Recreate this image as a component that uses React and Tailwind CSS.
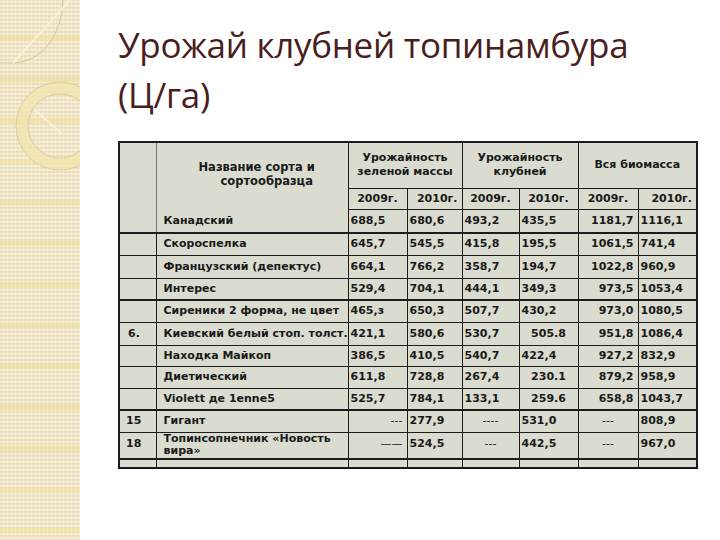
const rows = [
  { n: "", name: "Скороспелка", v: ["645,7", "545,5", "415,8", "195,5", "1061,5", "741,4"], h: "h-[22px]" },
  { n: "", name: "Французский (депектус)", v: ["664,1", "766,2", "358,7", "194,7", "1022,8", "960,9"], h: "h-[23px]" },
  { n: "", name: "Интерес", v: ["529,4", "704,1", "444,1", "349,3", "973,5", "1053,4"], h: "h-[22px]", thick: true },
  { n: "", name: "Сиреники 2 форма, не цвет", v: ["465,з", "650,3", "507,7", "430,2", "973,0", "1080,5"], h: "h-[22px]" },
  { n: "6.", name: "Киевский белый стоп. толст.", v: ["421,1", "580,6", "530,7", "505.8", "951,8", "1086,4"], h: "h-[23px]", c3: true },
  { n: "", name: "Находка Майкоп", v: ["386,5", "410,5", "540,7", "422,4", "927,2", "832,9"], h: "h-[21px]" },
  { n: "", name: "Диетический", v: ["611,8", "728,8", "267,4", "230.1", "879,2", "958,9"], h: "h-[22px]", c3: true },
  { n: "", name: "Violett де 1enne5", v: ["525,7", "784,1", "133,1", "259.6", "658,8", "1043,7"], h: "h-[22px]", c3: true, thick: true },
];

const cell = "border border-[#1c1c1c] px-[2px] py-0 align-middle whitespace-nowrap";
const right = "text-right pr-[4px]";
const center = "text-center";

function ValueCells({ v, c3 }) {
  return (
    <>
      <td className={cell}>{v[0]}</td>
      <td className={cell}>{v[1]}</td>
      <td className={cell}>{v[2]}</td>
      <td className={`${cell} ${c3 ? center : ""}`}>{v[3]}</td>
      <td className={`${cell} ${right}`}>{v[4]}</td>
      <td className={cell}>{v[5]}</td>
    </>
  );
}

function Strip() {
  return (
    <div className="relative w-[80px] h-[540px] shrink-0 overflow-hidden bg-[#efe4c4] bg-[repeating-linear-gradient(0deg,#e9dcb6_0px,#e9dcb6_1px,#f3ead2_1px,#f3ead2_3px,#ecdfbd_3px,#ecdfbd_4px)]">
      <div className="absolute inset-0 bg-[repeating-linear-gradient(90deg,transparent_0px,transparent_3px,rgba(255,255,255,0.25)_3px,rgba(255,255,255,0.25)_4px)]" />
      <div className="absolute inset-0 bg-[repeating-linear-gradient(180deg,transparent_0px,transparent_36px,rgba(240,225,160,0.7)_36px,rgba(240,225,160,0.7)_41px)]" />
      <svg className="absolute left-0 top-0" width="80" height="200" viewBox="0 0 80 200" fill="none">
        <path d="M0 63 H13" stroke="#dccba0" strokeWidth="1" />
        <path d="M63 0 A50 63 0 0 1 13 63" stroke="#d8c79a" strokeWidth="1" />
        <path d="M70 0 L13 63" stroke="#f7f0da" strokeWidth="2" />
        <circle cx="60" cy="126" r="38" stroke="#f2e5b0" strokeWidth="12" opacity="0.8" />
        <circle cx="60" cy="126" r="44" stroke="#dccc9e" strokeWidth="1" />
        <circle cx="60" cy="126" r="32" stroke="#dccc9e" strokeWidth="1" />
        <path d="M35 110 L62 134" stroke="#f7f0da" strokeWidth="2" />
      </svg>
    </div>
  );
}

export default function App() {
  return (
    <div className="flex w-[720px] h-[540px] bg-white overflow-hidden">
      <Strip />
      <div className="flex flex-col pl-[38px]">
        <h1 className="mt-[20px] text-[35px] leading-[50px] text-[#4a1e1e] font-['Open_Sans',sans-serif] font-normal tracking-[-0.3px]">
          <div>Урожай клубней топинамбура</div>
          <div>(Ц/га)</div>
        </h1>
        <table className="mt-[21px] border-collapse table-fixed w-[578px] bg-[#d9dccf] text-[#1a1a1a] text-[11px] leading-[12px] font-['DejaVu_Sans',sans-serif] font-semibold border-2 border-[#1c1c1c]">
          <colgroup>
            <col className="w-[37px]" />
            <col className="w-[192px]" />
            <col className="w-[59px]" />
            <col className="w-[55px]" />
            <col className="w-[57px]" />
            <col className="w-[59px]" />
            <col className="w-[60px]" />
            <col className="w-[59px]" />
          </colgroup>
          <tbody>
            <tr className="h-[45px]">
              <td rowSpan={3} className="border border-[#1c1c1c] border-r-[#777]" />
              <td rowSpan={3} className="border border-[#1c1c1c] border-l-[#777] p-0 align-top">
                <div className="flex flex-col h-[89px]">
                  <div className="pt-[17px] pl-[42px] text-[11.5px] leading-[14px]">Название сорта и</div>
                  <div className="pl-[64px] text-[11.5px] leading-[14px]">сортообразца</div>
                  <div className="mt-auto pb-[5px] pl-[7px]">Канадский</div>
                </div>
              </td>
              <td colSpan={2} className={`${cell} ${center} leading-[14px]`}>
                <div>Урожайность</div>
                <div>зеленой массы</div>
              </td>
              <td colSpan={2} className={`${cell} ${center} leading-[14px]`}>
                <div>Урожайность</div>
                <div>клубней</div>
              </td>
              <td colSpan={2} className={`${cell} ${center}`}>Вся биомасса</td>
            </tr>
            <tr className="h-[21px]">
              <td className={`${cell} ${center}`}>2009г.</td>
              <td className={`${cell} ${right}`}>2010г.</td>
              <td className={`${cell} ${center}`}>2009г.</td>
              <td className={`${cell} ${center}`}>2010г.</td>
              <td className={`${cell} ${center}`}>2009г.</td>
              <td className={`${cell} ${right}`}>2010г.</td>
            </tr>
            <tr className="h-[23px] border-b-2 border-[#1c1c1c]">
              <ValueCells v={["688,5", "680,6", "493,2", "435,5", "1181,7", "1116,1"]} />
            </tr>
            {rows.map((r) => (
              <tr key={r.name} className={`${r.h} ${r.thick ? "border-b-2 border-[#1c1c1c]" : ""}`}>
                <td className={`${cell} pl-[8px]`}>{r.n}</td>
                <td className={`${cell} pl-[7px]`}>{r.name}</td>
                <ValueCells v={r.v} c3={r.c3} />
              </tr>
            ))}
            <tr className="h-[22px]">
              <td className={`${cell} pl-[6px]`}>15</td>
              <td className={`${cell} pl-[7px]`}>Гигант</td>
              <td className={`${cell} ${right} font-normal`}>---</td>
              <td className={cell}>277,9</td>
              <td className={`${cell} ${center} font-normal`}>----</td>
              <td className={cell}>531,0</td>
              <td className={`${cell} ${center} font-normal`}>---</td>
              <td className={cell}>808,9</td>
            </tr>
            <tr className="h-[27px] border-b-2 border-[#1c1c1c]">
              <td className={`${cell} pl-[6px] align-bottom pb-[3px]`}>18</td>
              <td className={`${cell} pl-[7px] align-top pt-0 leading-[12px]`}>
                <div>Топинсопнечник «Новость</div>
                <div>вира»</div>
              </td>
              <td className={`${cell} ${right} align-bottom pb-[3px] font-normal`}>——</td>
              <td className={`${cell} align-bottom pb-[3px]`}>524,5</td>
              <td className={`${cell} ${center} align-bottom pb-[3px] font-normal`}>---</td>
              <td className={`${cell} align-bottom pb-[3px]`}>442,5</td>
              <td className={`${cell} ${center} align-bottom pb-[3px] font-normal`}>---</td>
              <td className={`${cell} align-bottom pb-[3px]`}>967,0</td>
            </tr>
            <tr className="h-[9px]">
              <td className={cell} />
              <td className={cell} />
              <td className={cell} />
              <td className={cell} />
              <td className={cell} />
              <td className={cell} />
              <td className={cell} />
              <td className={cell} />
            </tr>
          </tbody>
        </table>
      </div>
    </div>
  );
}
